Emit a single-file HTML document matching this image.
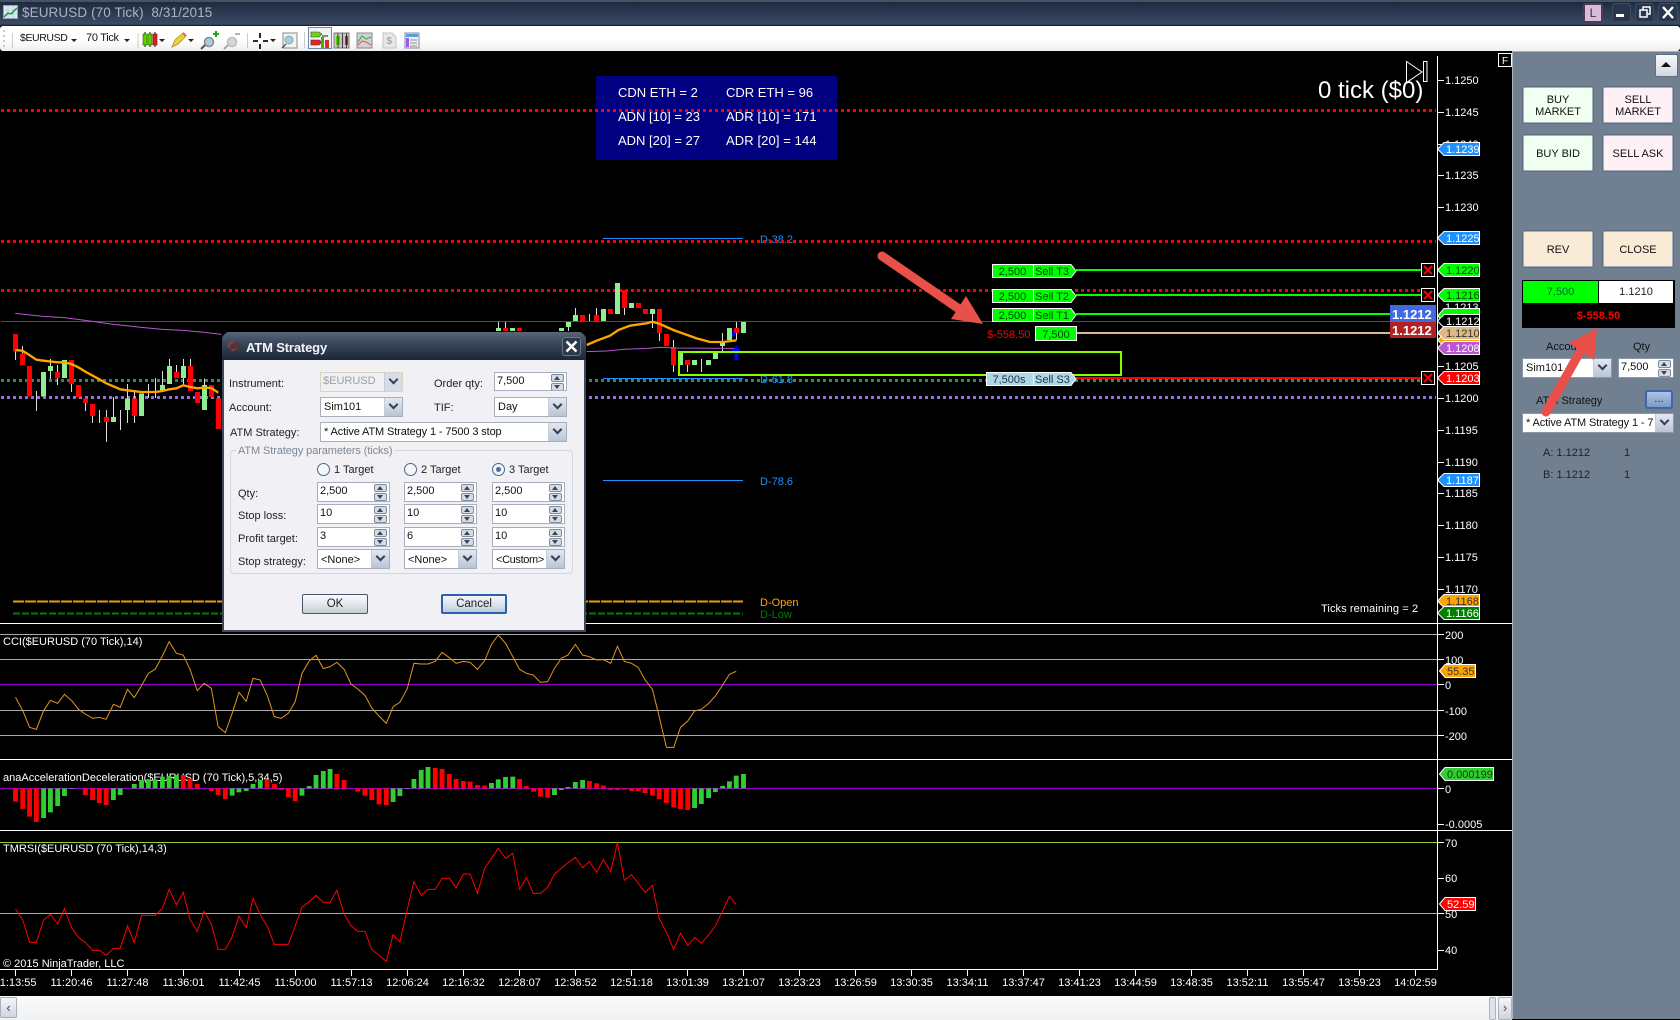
<!DOCTYPE html>
<html><head><meta charset="utf-8"><title>$EURUSD (70 Tick)</title>
<style>
html,body{margin:0;padding:0;background:#000;width:1680px;height:1020px;overflow:hidden}
body{position:relative;font-family:"Liberation Sans",sans-serif;font-size:11px;color:#111}
.a{position:absolute;box-sizing:border-box}
.t{position:absolute;white-space:nowrap;font-size:11px;line-height:14px}
svg{position:absolute;left:0;top:0}
svg text{font-family:"Liberation Sans",sans-serif;font-size:11px}
.inp{position:absolute;box-sizing:border-box;background:#fff;border:1px solid #a8afba;font-size:11px;line-height:15px;padding:0 0 0 2px;white-space:nowrap;overflow:hidden;color:#111}
.dd{position:absolute;top:0;right:0;bottom:0;width:17px;background:linear-gradient(#e2e8f1,#b9c5d6);border-left:1px solid #c4ccd8}
.dd::after{content:"";position:absolute;left:5px;top:3px;width:5px;height:5px;border-left:2px solid #333e50;border-bottom:2px solid #333e50;transform:rotate(-45deg)}
.sp{position:absolute;top:1px;right:2px;width:13px}
.sp i{display:block;height:8px;box-sizing:border-box;border:1px solid #7f8b9c;border-radius:2px;background:#d6dce5;position:relative;margin-bottom:1px}
.sp i::after{content:"";position:absolute;left:2px;top:1px;border-left:3px solid transparent;border-right:3px solid transparent}
.sp i.u::after{border-bottom:4px solid #3a4658}
.sp i.d::after{border-top:4px solid #3a4658}
.btn{position:absolute;box-sizing:border-box;border:2px solid #a6b0bc;border-radius:3px;display:flex;align-items:center;justify-content:center;text-align:center;font-size:11px;line-height:12.5px;color:#111;outline:1px solid #5f6e80;outline-offset:-1px;padding-top:2px}
.r{position:absolute;box-sizing:border-box;width:13px;height:13px;border-radius:50%;border:1px solid #47698c;background:#f4f6fa}
.dlg{color:#222}
</style></head><body>

<!-- title bar -->
<div class="a" style="left:0;top:0;width:1680px;height:27px;background:linear-gradient(#1f2a3c 0,#6a7a90 1px,#1e2a3c 2px,#26334a 8px,#3b4a64 24px,#0e141e 26px)"></div>
<div class="t" style="left:22px;top:5px;font-size:13.5px;line-height:16px;letter-spacing:.1px;color:#a9b3c2">$EURUSD (70 Tick)&nbsp; 8/31/2015</div>
<svg width="15" height="15" style="left:3px;top:5px" viewBox="0 0 15 15"><rect x=".5" y=".5" width="14" height="13" fill="#dfe8f2" stroke="#8fa5bf"/><path d="M2 5H14M2 9H14M5 1V13M10 1V13" stroke="#a9bdd3" stroke-width=".6"/><path d="M1 12L5 8L8 9L14 3" stroke="#19a63a" stroke-width="1.6" fill="none"/></svg>
<div class="a" style="left:1583px;top:3px;width:20px;height:20px;background:#d8bcd8;border:2px solid #4d3a55;border-radius:2px;color:#333;text-align:center;font-size:12px;line-height:16px">L</div>
<div class="a" style="left:1612px;top:3px;width:19px;height:19px;background:#27364c;border:1px solid #3d4c63;border-radius:3px"></div>
<div class="a" style="left:1635px;top:3px;width:19px;height:19px;background:#27364c;border:1px solid #3d4c63;border-radius:3px"></div>
<div class="a" style="left:1658px;top:3px;width:20px;height:19px;background:#27364c;border:1px solid #3d4c63;border-radius:3px"></div>
<svg width="1680" height="27"><path d="M1616 14H1624V17H1616Z" fill="#fff"/><path d="M1640 10h7v7h-7zM1643 10V7h7v7h-3" fill="none" stroke="#fff" stroke-width="1.5"/><path d="M1663 7L1673 18M1673 7L1663 18" stroke="#fff" stroke-width="2.4"/></svg>

<!-- toolbar -->
<div class="a" style="left:0;top:26px;width:1680px;height:25px;background:linear-gradient(#fff 0,#fff 55%,#efefef);border-radius:3px"></div>
<div class="t" style="left:20px;top:31px;font-size:10.5px;letter-spacing:-.4px;color:#111">$EURUSD</div>
<div class="t" style="left:86px;top:31px;font-size:11px;letter-spacing:-.3px;color:#111">70 Tick</div>
<div class="a" style="left:308px;top:27px;width:24px;height:22px;border:1px solid #6d8ba6;background:#eef3f8"></div>
<svg width="460" height="52" style="left:0;top:0">
<path d="M3 30h2v2H3zM3 35h2v2H3zM3 40h2v2H3zM3 45h2v2H3z" fill="#ccc"/>
<path d="M12.500 33V48M138 33V48M247.500 33V48M304.500 32V48" stroke="#ccc"/>
<g fill="#222"><path d="M71 39h6l-3 3zM124 39h6l-3 3zM159 39h6l-3 3zM188 39h6l-3 3zM270 39h6l-3 3z"/></g>
<g stroke="#111"><path d="M145 32V47M150 32V47M155 32V47"/></g>
<rect x="143" y="34" width="4" height="11" fill="#5fd000" stroke="#2a6000" stroke-width=".6"/><rect x="148" y="34" width="4" height="11" fill="#5fd000" stroke="#2a6000" stroke-width=".6"/><rect x="153" y="34" width="4" height="11" fill="#e02020" stroke="#701010" stroke-width=".6"/>
<path d="M172 47L175 40L183 33L186 36L178 44Z" fill="#f2d23c" stroke="#a88a18" stroke-width=".8"/><path d="M183 33L186 36" stroke="#e36a50" stroke-width="2"/>
<circle cx="209" cy="42" r="4.500" fill="#a9cbe8" stroke="#8a8a8a" stroke-width="1.500"/><path d="M205 45L201 49" stroke="#555" stroke-width="2"/><path d="M213 34H219M216 31V37" stroke="#1aaa1a" stroke-width="2"/>
<circle cx="232" cy="42" r="4.500" fill="#d6d6d6" stroke="#bcbcbc" stroke-width="1.500"/><path d="M228 45L224 49" stroke="#aaa" stroke-width="2"/><path d="M235 34H240" stroke="#b5b5b5" stroke-width="2"/>
<path d="M253 41H258M263 41H268M260 33V38M260 44V49" stroke="#111" stroke-width="1.800"/>
<rect x="283" y="33" width="14" height="15" fill="#f4f4f4" stroke="#888"/><circle cx="289" cy="40" r="4" fill="#a9cbe8" stroke="#8aa"/><path d="M286 44L282 48" stroke="#555" stroke-width="1.500"/>
<path d="M311 32H319L322 34L319 37H311Z" fill="#77cc22" stroke="#2a5a10" stroke-width=".6"/><path d="M311 40H319L322 42L319 45H311Z" fill="#e02a2a" stroke="#701010" stroke-width=".6"/><rect x="321" y="37" width="3" height="11" fill="#3cb400"/><rect x="325" y="40" width="4" height="8" fill="#e02a2a"/><path d="M322 36H328" stroke="#222"/>
<rect x="334" y="33" width="15" height="15" fill="#c8c8c8" stroke="#777"/><rect x="336" y="36" width="4" height="9" fill="#5fd000"/><rect x="341" y="37" width="3" height="7" fill="#bbb"/><rect x="345" y="36" width="3" height="9" fill="#e02020"/><path d="M338 33V48M342.500 33V48M346.500 33V48" stroke="#111" stroke-width=".7"/>
<rect x="357" y="33" width="15" height="15" fill="#d2d2d2" stroke="#888"/><path d="M358 42L362 36L366 39L371 37" fill="none" stroke="#2aa84a"/><path d="M358 45L362 41L366 42L371 45" fill="none" stroke="#e05050"/>
<path d="M383 33H392L396 37V48H383Z" fill="#e8e8e8" stroke="#c4c4c4"/><text x="386.500" y="44" style="font-size:10px;font-weight:bold" fill="#a8a8a8">$</text>
<rect x="405" y="33" width="14" height="15" fill="#eef0f4" stroke="#7a8ca8"/><rect x="406" y="34" width="12" height="3" fill="#5aa0dc"/><rect x="406" y="38" width="3" height="9" fill="#9c5ae0"/><path d="M410 40H417M410 43H417M410 46H417" stroke="#8a8a9a"/>
</svg>

<!-- main chart graphics -->
<svg width="1680" height="1020" style="top:0">
<rect x="596" y="76" width="241" height="84" fill="#000080"/>
<g fill="#fff" style="font-size:13px">
<text x="618" y="97" style="font-size:13px">CDN ETH = 2</text><text x="726" y="97" style="font-size:13px">CDR ETH = 96</text>
<text x="618" y="121" style="font-size:13px">ADN [10] = 23</text><text x="726" y="121" style="font-size:13px;letter-spacing:.1px">ADR [10] = 171</text>
<text x="618" y="145" style="font-size:13px">ADN [20] = 27</text><text x="726" y="145" style="font-size:13px;letter-spacing:.1px">ADR [20] = 144</text>
</g>

<!-- fib lines + labels -->
<path d="M603 238.500H743M603 378.500H743M603 480.500H743" stroke="#1e90ff" stroke-width="1"/>
<g fill="#1e90ff"><text x="760" y="243">D-38.2</text><text x="760" y="383">D-61.8</text><text x="760" y="485">D-78.6</text></g>
<text x="760" y="606" fill="#ffa500">D-Open</text><text x="760" y="618" fill="#008000">D-Low</text>

<!-- thin lines -->
<path d="M1 321.500H1436" stroke="#a52a2a"/>

<!-- dotted -->
<g fill="none" stroke-width="3" stroke-dasharray="3 3">
<path d="M1 110.500H1436M1 241.500H1436M1 290.500H1421" stroke="#f00"/>
<path d="M1 380.500H1421" stroke="#2e8b57"/>
<path d="M1 397.500H1436" stroke="#9370db"/>
</g>
<path d="M13 601.500H743" stroke="#ec9a0c" stroke-width="2" stroke-dasharray="11 1"/>
<path d="M13 613.500H743" stroke="#008000" stroke-width="2" stroke-dasharray="7 2"/>

<!-- candles left -->
<g transform="translate(0,310) scale(.33333)" fill="none" shape-rendering="crispEdges">
<path stroke="#ddd" stroke-width="3" d="M46 125V150M67 108V130M109 243V303M151 147V207M172 165V225M214 222V246M256 279V303M277 318V339M298 300V339M319 300V396M340 261V321M361 300V360M382 222V339M403 243V339M445 222V264M466 204V264M487 183V225M508 147V168M529 165V186M550 147V225M571 147V168M613 205V225"/>
<path stroke="#f00" stroke-width="15" d="M46 72V125M67 130V165M88 168V260M172 186V204M214 150V222M235 225V261M256 265V279M277 282V318M319 321V336M403 265V318M529 186V204M571 168V243M592 246V279M634 225V261M655 265V357"/>
<path stroke="#90ee90" stroke-width="15" d="M130 186V260M151 168V183M193 150V204M340 321V336M382 265V300M424 250V318M487 225V243M508 168V222M550 168V204M613 225V300"/>
<polyline stroke="#ba55d3" stroke-width="3" shape-rendering="auto" points="46,10 130,19 193,23 256,31 340,43 424,52 487,58 550,61 613,67 665,73"/>
<polyline stroke="#ffa500" stroke-width="7" shape-rendering="auto" points="46,120 67,122 88,135 109,149 130,152 172,157 193,157 214,162 235,172 256,185 298,208 319,220 361,238 382,241 424,246 466,246 487,243 508,238 529,235 550,226 571,231 592,235 613,233 634,234 655,248"/>
</g>
<!-- candles right -->
<g transform="translate(490,270) scale(.33333)" fill="none" shape-rendering="crispEdges">
<path stroke="#ddd" stroke-width="3" d="M25 156V174M46 156V174M235 171V183M256 114V135M298 132V153M319 114V135M403 114V135M487 132V174M508 189V213M550 210V231M550 285V306M592 285V306M634 267V306M697 189V243M739 156V210"/>
<path stroke="#f00" stroke-width="15" d="M46 174V183M88 174V183M277 135V153M319 135V153M361 117V132M403 60V114M445 99V114M466 117V132M508 117V189M529 192V228M550 231V285M592 270V285M739 174V189"/>
<path stroke="#90ee90" stroke-width="15" d="M25 174V183M67 174V183M214 174V183M235 156V171M256 135V153M340 117V153M382 39V132M424 99V114M487 117V132M571 249V285M613 270V285M655 270V285M676 249V267M697 213V228M718 174V210M760 156V189"/>
<polyline stroke="#ba55d3" stroke-width="3" shape-rendering="auto" points="290,245 350,243 400,238 470,235 510,232 560,234 739,235"/>
<polyline stroke="#ffa500" stroke-width="7" shape-rendering="auto" points="290,225 320,212 360,197 385,180 420,167 470,160 487,155 510,162 550,180 620,205 660,216 700,216 739,211"/>
<path d="M739 226L752 243H745V270H733V243H726Z" fill="#0000ff" shape-rendering="auto"/>
<path d="M727 178L738 191L727 204Z" fill="#0000ff" shape-rendering="auto"/>
</g>

<!-- box and position lines -->
<rect x="679" y="352" width="442" height="23" fill="none" stroke="#7fff00" stroke-width="2"/>
<path d="M1076 270H1421M1076 295H1421M1076 314H1391" stroke="#0f0" stroke-width="2"/>
<path d="M1076 333H1391" stroke="#deb887" stroke-width="2"/>
<path d="M1076 378H1421" stroke="#f00" stroke-width="2"/>

<!-- order labels -->
<g stroke="#fff" fill="#0f0">
<path d="M992.500 264.500H1071L1076 271L1071 277.500H992.500Z"/><path d="M1033.500 264V278"/>
<path d="M992.500 289.500H1071L1076 296L1071 302.500H992.500Z"/><path d="M1033.500 289V303"/>
<path d="M992.500 308.500H1071L1076 315L1071 321.500H992.500Z"/><path d="M1033.500 308V322"/>
<rect x="1035.500" y="326.500" width="41" height="14"/>
<path d="M986.500 372.500H1071L1076 379L1071 385.500H986.500Z" fill="#add8e6"/><path d="M1033.500 372V386" stroke="#eaf6fb"/>
</g>
<g fill="#040">
<text x="1012.500" y="275" text-anchor="middle">2,500</text><text x="1035" y="275">Sell T3</text>
<text x="1012.500" y="300" text-anchor="middle">2,500</text><text x="1035" y="300">Sell T2</text>
<text x="1012.500" y="319" text-anchor="middle">2,500</text><text x="1035" y="319">Sell T1</text>
<text x="1056" y="338" text-anchor="middle">7,500</text>
</g>
<g fill="#234"><text x="1009" y="383" text-anchor="middle">7,500s</text><text x="1035" y="383">Sell S3</text></g>
<text x="987" y="338" fill="#f00">$-558.50</text>

<!-- X boxes -->
<g fill="#000" stroke="#fff"><rect x="1421.500" y="263.500" width="13" height="13"/><rect x="1421.500" y="288.500" width="13" height="13"/><rect x="1421.500" y="371.500" width="13" height="13"/></g>
<path d="M1424 266L1432 274M1432 266L1424 274M1424 291L1432 299M1432 291L1424 299M1424 374L1432 382M1432 374L1424 382" stroke="#f00" stroke-width="2"/>

<!-- big price tags -->
<rect x="1390" y="305" width="46" height="17" fill="#4169e1"/><rect x="1390" y="322" width="46" height="16" fill="#b22222"/>
<g fill="#fff" style="font-weight:bold"><text x="1392" y="319" style="font-size:13px;font-weight:bold">1.1212</text><text x="1392" y="335" style="font-size:13px;font-weight:bold">1.1212</text></g>

<!-- separators, axis -->
<path d="M0 623.500H1512M0 759.500H1512M0 830.500H1512" stroke="#fff"/>
<path d="M0 969.500H1437M1437.500 56V970" stroke="#fff"/>
<g stroke="#fff"><path d="M1438 80.500h6M1438 112.500h6M1438 144.500h6M1438 175.500h6M1438 207.500h6M1438 366.500h6M1438 398.500h6M1438 430.500h6M1438 462.500h6M1438 493.500h6M1438 525.500h6M1438 557.500h6M1438 589.500h6M1438 634.500h6M1438 659.500h6M1438 684.500h6M1438 710.500h6M1438 735.500h6M1438 788.500h6M1438 824.500h6M1438 842.500h6M1438 878.500h6M1438 913.500h6M1438 950.500h6"/></g>
<g fill="#fff">
<text x="1445" y="84">1.1250</text><text x="1445" y="116">1.1245</text><text x="1445" y="148">1.1240</text><text x="1445" y="179">1.1235</text><text x="1445" y="211">1.1230</text><text x="1445" y="311">1.1213</text><text x="1445" y="370">1.1205</text><text x="1445" y="402">1.1200</text><text x="1445" y="434">1.1195</text><text x="1445" y="466">1.1190</text><text x="1445" y="497">1.1185</text><text x="1445" y="529">1.1180</text><text x="1445" y="561">1.1175</text><text x="1445" y="593">1.1170</text>
<text x="1445" y="639">200</text><text x="1445" y="664">100</text><text x="1445" y="689">0</text><text x="1445" y="715">-100</text><text x="1445" y="740">-200</text>
<text x="1445" y="793">0</text><text x="1445" y="828">-0.0005</text>
<text x="1445" y="847">70</text><text x="1445" y="882">60</text><text x="1445" y="918">50</text><text x="1445" y="954">40</text>
<text x="1321" y="612" style="letter-spacing:.1px">Ticks remaining = 2</text>
<text x="3" y="645">CCI($EURUSD (70 Tick),14)</text>
<text x="3" y="781">anaAccelerationDeceleration($EURUSD (70 Tick),5,34,5)</text>
<text x="3" y="852">TMRSI($EURUSD (70 Tick),14,3)</text>
<text x="3" y="967">© 2015 NinjaTrader, LLC</text>
</g>

<!-- axis price tags -->
<g stroke="#fff">
<path d="M1437.500 149L1444 142.500H1479.500V155.500H1444Z" fill="#1e90ff"/>
<path d="M1437.500 238L1444 231.500H1479.500V244.500H1444Z" fill="#1e90ff"/>
<path d="M1437.500 270L1444 263.500H1479.500V276.500H1444Z" fill="#0f0"/>
<path d="M1437.500 295L1444 288.500H1479.500V301.500H1444Z" fill="#0f0"/>
<path d="M1437.500 316L1444 308.500H1479.500V322H1444Z" fill="#0f0"/>
<path d="M1437.500 321L1444 314.500H1479.500V327.500H1444Z" fill="#000"/>
<path d="M1437.500 340L1444 333.500H1479.500V346.500H1444Z" fill="#ffa500"/>
<path d="M1437.500 333L1444 326.500H1479.500V339.500H1444Z" fill="#deb887"/>
<path d="M1437.500 348L1444 341.500H1479.500V354.500H1444Z" fill="#ba55d3"/>
<path d="M1437.500 378L1444 371.500H1479.500V384.500H1444Z" fill="#f00"/>
<path d="M1437.500 480L1444 473.500H1479.500V486.500H1444Z" fill="#1e90ff"/>
<path d="M1437.500 601L1444 594.500H1479.500V607.500H1444Z" fill="#ffa500"/>
<path d="M1437.500 613L1444 606.500H1479.500V619.500H1444Z" fill="#008000"/>
<path d="M1439.500 671L1445 664.500H1475.500V677.500H1445Z" fill="#ffa500"/>
<path d="M1439.500 774L1445 767.500H1493.500V780.500H1445Z" fill="#32cd32"/>
<path d="M1439.500 904L1445 897.500H1475.500V910.500H1445Z" fill="#f00"/>
</g>
<g fill="#fff">
<text x="1446" y="153">1.1239</text><text x="1446" y="242">1.1225</text><text x="1446" y="325">1.1212</text><text x="1446" y="352">1.1208</text><text x="1446" y="382">1.1203</text><text x="1446" y="484">1.1187</text><text x="1446" y="617">1.1166</text><text x="1447" y="908">52.59</text>
</g>
<g fill="#040"><text x="1446" y="274">1.1220</text><text x="1446" y="299">1.1216</text></g>
<g fill="#333"><text x="1446" y="337">1.1210</text><text x="1446" y="605">1.1168</text><text x="1447" y="675">55.35</text><text x="1447" y="778" fill="#040">0.000199</text></g>

<!-- 0 tick -->
<text x="1318" y="98" fill="#fff" style="font-size:24px">0 tick ($0)</text>
<path d="M1406.500 61.500L1422 72L1406.500 82.500Z" fill="none" stroke="#fff"/><rect x="1423.500" y="61.500" width="3.500" height="20" fill="none" stroke="#fff"/>
<rect x="1498.500" y="53.500" width="13" height="13" fill="#000" stroke="#fff"/><text x="1502" y="64" fill="#fff" style="font-size:10px">F</text>

<!-- CCI lines -->
<path d="M0 634.500H1437M0 659.500H1437M0 710.500H1437M0 735.500H1437M0 913.500H1437" stroke="#aaa"/>
<path d="M0 684.500H1437M0 788.500H1437" stroke="#9400d3"/>
<path d="M0 842.500H1437" stroke="#9acd32"/>

<g transform="translate(0,620) scale(.48469,.33333)" fill="none">
<path stroke="#f00" stroke-width="10" d="M32 505V545M47 505V567M61 505V590M75 505V606M176 505V525M191 505V540M205 505V549M219 505V555M378 505V465M392 505V475M407 505V492M436 505V513M450 505V525M465 505V537M551 505V478M566 505V492M580 505V510M595 505V531M609 505V543M695 505V462M710 505V480M738 505V515M753 505V527M767 505V540M782 505V553M797 505V555M898 505V444M912 505V447M927 505V462M941 505V477M956 505V483M970 505V485M985 505V495M1000 505V497M1072 505V477M1086 505V498M1101 505V515M1115 505V530M1130 505V533M1216 505V483M1231 505V490M1245 505V497M1260 505V510M1274 505V510M1288 505V509M1303 505V513M1317 505V513M1331 505V519M1346 505V527M1360 505V537M1375 505V549M1390 505V562M1404 505V567M1419 505V570"/>
<path stroke="#32cd32" stroke-width="10" d="M90 505V594M104 505V577M119 505V558M133 505V528M148 505V507M234 505V540M248 505V525M277 505V492M292 505V480M306 505V478M320 505V478M335 505V470M349 505V468M364 505V465M479 505V527M493 505V517M508 505V513M522 505V492M537 505V480M623 505V527M638 505V498M652 505V465M667 505V453M681 505V447M811 505V546M825 505V528M840 505V507M854 505V477M869 505V450M883 505V441M1014 505V489M1028 505V478M1043 505V471M1058 505V470M1144 505V525M1158 505V510M1172 505V501M1187 505V486M1202 505V480M1433 505V564M1447 505V552M1462 505V534M1476 505V516M1491 505V498M1505 505V484M1519 505V467M1534 505V462"/>
<polyline vector-effect="non-scaling-stroke" stroke="#e0961c" stroke-width="1" points="32,232 47,272 61,322 75,328 90,272 104,241 119,250 133,223 148,242 162,268 176,282 191,295 205,292 219,298 234,253 248,262 263,208 277,233 292,197 306,160 320,148 335,108 349,65 364,100 378,105 392,148 407,212 421,190 436,205 450,320 465,338 479,280 493,217 508,244 522,175 537,180 551,225 566,290 580,295 595,280 609,245 623,160 638,123 652,106 667,146 681,140 695,127 710,148 724,192 738,207 753,226 767,264 782,288 797,310 811,260 825,247 840,207 854,130 869,132 883,132 898,124 912,97 927,113 941,130 956,124 970,127 985,148 1000,122 1014,73 1028,45 1043,70 1058,110 1072,148 1086,160 1100,165 1115,187 1130,185 1144,145 1158,115 1172,105 1187,73 1202,105 1216,110 1231,120 1245,119 1260,130 1274,79 1288,124 1303,130 1317,143 1331,180 1346,208 1360,290 1375,382 1390,382 1404,322 1419,303 1433,273 1447,268 1462,250 1476,228 1491,195 1505,163 1519,154"/>
</g>
<g transform="translate(0,820) scale(.48469,.33333)" fill="none">
<polyline vector-effect="non-scaling-stroke" stroke="#f00" stroke-width="1" points="32,267 47,300 61,367 75,367 90,300 104,283 119,312 133,266 148,324 162,352 176,367 191,391 205,391 219,406 234,385 248,385 263,317 277,368 292,286 306,286 320,286 335,265 349,208 364,254 378,217 392,298 407,334 421,274 436,312 450,388 465,388 479,350 493,289 508,323 522,235 537,285 551,318 566,373 580,373 595,373 609,318 623,262 638,245 652,226 667,247 681,247 695,211 710,282 724,317 738,334 753,334 767,388 782,406 797,424 811,344 825,365 840,270 854,185 869,226 883,208 898,208 912,175 927,175 941,203 956,162 970,162 985,220 1000,145 1014,115 1028,85 1043,115 1058,100 1072,208 1086,172 1100,220 1115,220 1130,202 1144,162 1158,145 1172,128 1187,112 1202,143 1216,125 1231,157 1245,119 1260,155 1274,67 1288,181 1303,164 1317,190 1331,217 1346,196 1360,295 1375,337 1390,388 1404,340 1419,377 1433,352 1447,370 1462,345 1476,318 1491,272 1505,229 1519,254"/>
</g>

<!-- time axis -->
<path stroke="#fff" d="M15.500 970v6M71.500 970v6M127.500 970v6M183.500 970v6M239.500 970v6M295.500 970v6M351.500 970v6M407.500 970v6M463.500 970v6M519.500 970v6M575.500 970v6M631.500 970v6M687.500 970v6M743.500 970v6M799.500 970v6M855.500 970v6M911.500 970v6M967.500 970v6M1023.500 970v6M1079.500 970v6M1135.500 970v6M1191.500 970v6M1247.500 970v6M1303.500 970v6M1359.500 970v6M1415.500 970v6"/>
<g fill="#fff" text-anchor="middle" style="font-size:10.500px">
<text x="15.500" y="986">11:13:55</text><text x="71.500" y="986">11:20:46</text><text x="127.500" y="986">11:27:48</text><text x="183.500" y="986">11:36:01</text><text x="239.500" y="986">11:42:45</text><text x="295.500" y="986">11:50:00</text><text x="351.500" y="986">11:57:13</text><text x="407.500" y="986">12:06:24</text><text x="463.500" y="986">12:16:32</text><text x="519.500" y="986">12:28:07</text><text x="575.500" y="986">12:38:52</text><text x="631.500" y="986">12:51:18</text><text x="687.500" y="986">13:01:39</text><text x="743.500" y="986">13:21:07</text><text x="799.500" y="986">13:23:23</text><text x="855.500" y="986">13:26:59</text><text x="911.500" y="986">13:30:35</text><text x="967.500" y="986">13:34:11</text><text x="1023.500" y="986">13:37:47</text><text x="1079.500" y="986">13:41:23</text><text x="1135.500" y="986">13:44:59</text><text x="1191.500" y="986">13:48:35</text><text x="1247.500" y="986">13:52:11</text><text x="1303.500" y="986">13:55:47</text><text x="1359.500" y="986">13:59:23</text><text x="1415.500" y="986">14:02:59</text>
</g>
</svg>

<!-- scrollbar -->
<div class="a" style="left:0;top:996px;width:1512px;height:24px;background:linear-gradient(#fafafa,#f0f1f3)"></div>
<div class="a" style="left:0;top:997px;width:17px;height:21px;background:linear-gradient(#f4f6f9,#cfd5dd);border:1px solid #a8b0bc;border-radius:2px;color:#445;font-size:13px;line-height:19px;text-align:center">‹</div>
<div class="a" style="left:1489px;top:997px;width:7px;height:23px;background:#dfe3e8;border:1px solid #aab2be;border-radius:2px"></div>
<div class="a" style="left:1498px;top:997px;width:14px;height:23px;background:linear-gradient(#f4f6f9,#cfd5dd);border:1px solid #a8b0bc;border-radius:2px;color:#445;font-size:13px;line-height:20px;text-align:center">›</div>

<!-- right panel -->
<div class="a" style="left:1512px;top:51px;width:168px;height:968px;background:#708090;border-left:1px solid #aeb6c0;border-top:1px solid #a8b0ba"></div>
<div class="a" style="left:1655px;top:54px;width:23px;height:23px;background:linear-gradient(#f8f9fb,#d2d8e0);border:1px solid #5f6e80;border-radius:2px"></div>
<svg width="1680" height="100"><path d="M1666 62L1671 67H1661Z" fill="#111"/></svg>
<div class="btn" style="left:1522px;top:86px;width:72px;height:38px;background:#f0fff0">BUY<br>MARKET</div>
<div class="btn" style="left:1602px;top:86px;width:72px;height:38px;background:#fff0f5">SELL<br>MARKET</div>
<div class="btn" style="left:1522px;top:134px;width:72px;height:38px;background:#f0fff0">BUY BID</div>
<div class="btn" style="left:1602px;top:134px;width:72px;height:38px;background:#fff0f5">SELL ASK</div>
<div class="btn" style="left:1522px;top:230px;width:72px;height:38px;background:#faebd7">REV</div>
<div class="btn" style="left:1602px;top:230px;width:72px;height:38px;background:#faebd7">CLOSE</div>
<div class="a" style="left:1522px;top:280px;width:153px;height:48px;background:#000;border:1px solid #000"></div>
<div class="a" style="left:1523px;top:281px;width:75px;height:22px;background:#0f0;text-align:center;line-height:22px;color:#063">7,500</div>
<div class="a" style="left:1599px;top:281px;width:74px;height:22px;background:#fff;text-align:center;line-height:22px;color:#222">1.1210</div>
<div class="a" style="left:1523px;top:305px;width:151px;height:23px;text-align:center;line-height:23px;color:#f00;font-weight:bold">$-558.50</div>
<div class="t" style="left:1546px;top:340px">Account</div>
<div class="t" style="left:1633px;top:340px">Qty</div>
<div class="inp" style="left:1522px;top:358px;width:90px;height:20px;border-color:#8c98a6;line-height:19px;padding-left:3px">Sim101<div class="dd"></div></div>
<div class="inp" style="left:1618px;top:358px;width:56px;height:20px;border-color:#8c98a6;line-height:17px">7,500<div class="sp"><i class="u"></i><i class="d"></i></div></div>
<div class="t" style="left:1536px;top:394px">ATM Strategy</div>
<div class="a" style="left:1645px;top:390px;width:28px;height:19px;background:linear-gradient(#a9c4e4,#7c9bc4);border:2px solid #3e66a8;border-radius:3px;text-align:center;line-height:14px;color:#223">...</div>
<div class="inp" style="left:1522px;top:413px;width:152px;height:20px;border-color:#8c98a6;line-height:19px;padding-left:3px;letter-spacing:-.12px">* Active ATM Strategy 1 - 7<div class="dd"></div></div>
<div class="t" style="left:1543px;top:446px;color:#222">A: 1.1212</div><div class="t" style="left:1624px;top:446px;color:#222">1</div>
<div class="t" style="left:1543px;top:468px;color:#222">B: 1.1212</div><div class="t" style="left:1624px;top:468px;color:#222">1</div>

<!-- dialog -->
<div class="dlg">
<div class="a" style="left:222px;top:332px;width:364px;height:300px;background:#f0f0f5;border:2px solid #3e4a5c;border-top:0;border-radius:8px 8px 0 0"></div>
<div class="a" style="left:222px;top:332px;width:364px;height:28px;background:linear-gradient(#5a6678,#3c4a5e 35%,#1b2637);border-radius:8px 8px 0 0"></div>
<svg width="260" height="360"><circle cx="233" cy="346" r="4" fill="none" stroke="#a33" stroke-width="2" stroke-dasharray="8 3"/><circle cx="236" cy="346" r="3.500" fill="#5e2a2a" opacity=".7"/></svg>
<div class="t" style="left:246px;top:340px;font-size:13px;line-height:16px;color:#f2f4f8;font-weight:bold;letter-spacing:-.15px">ATM Strategy</div>
<div class="a" style="left:562px;top:337px;width:19px;height:19px;background:#2c384c;border:1px solid #6a7688;border-radius:3px"></div>
<svg width="590" height="360"><path d="M566.500 341.500L576.500 351.500M576.500 341.500L566.500 351.500" stroke="#fff" stroke-width="2.500"/></svg>

<div class="t" style="left:229px;top:377px">Instrument:</div>
<div class="inp" style="left:320px;top:372px;width:83px;height:20px;background:#eef0f2;border-color:#d8d4c0;color:#9aa0a8;line-height:17px">$EURUSD<div class="dd" style="background:#d6dde6"></div></div>
<div class="t" style="left:434px;top:377px">Order qty:</div>
<div class="inp" style="left:494px;top:372px;width:73px;height:19px;line-height:16px">7,500<div class="sp"><i class="u"></i><i class="d"></i></div></div>
<div class="t" style="left:229px;top:401px">Account:</div>
<div class="inp" style="left:320px;top:397px;width:83px;height:20px;line-height:19px;padding-left:3px">Sim101<div class="dd"></div></div>
<div class="t" style="left:434px;top:401px">TIF:</div>
<div class="inp" style="left:494px;top:397px;width:73px;height:20px;line-height:19px;padding-left:3px">Day<div class="dd"></div></div>
<div class="t" style="left:230px;top:426px">ATM Strategy:</div>
<div class="inp" style="left:320px;top:422px;width:247px;height:20px;line-height:18px;padding-left:3px;letter-spacing:-.12px">* Active ATM Strategy 1 - 7500 3 stop<div class="dd"></div></div>
<div class="a" style="left:230px;top:450px;width:343px;height:124px;border:1px solid #d4d8de;border-radius:4px"></div>
<div class="t" style="left:236px;top:444px;background:#f0f0f5;padding:0 2px;color:#7f8894;letter-spacing:-.1px">ATM Strategy parameters (ticks)</div>

<div class="r" style="left:317px;top:463px"></div><div class="t" style="left:334px;top:463px">1 Target</div>
<div class="r" style="left:404px;top:463px"></div><div class="t" style="left:421px;top:463px">2 Target</div>
<div class="r" style="left:492px;top:463px"></div><div class="a" style="left:496px;top:467px;width:5px;height:5px;border-radius:50%;background:#4a6f9a"></div><div class="t" style="left:509px;top:463px">3 Target</div>

<div class="t" style="left:238px;top:487px">Qty:</div>
<div class="t" style="left:238px;top:509px">Stop loss:</div>
<div class="t" style="left:238px;top:532px">Profit target:</div>
<div class="t" style="left:238px;top:555px">Stop strategy:</div>

<div class="inp" style="left:317px;top:482px;width:73px;height:20px;line-height:16px">2,500<div class="sp"><i class="u"></i><i class="d"></i></div></div>
<div class="inp" style="left:404px;top:482px;width:73px;height:20px;line-height:16px">2,500<div class="sp"><i class="u"></i><i class="d"></i></div></div>
<div class="inp" style="left:492px;top:482px;width:73px;height:20px;line-height:16px">2,500<div class="sp"><i class="u"></i><i class="d"></i></div></div>
<div class="inp" style="left:317px;top:504px;width:73px;height:20px;line-height:16px">10<div class="sp"><i class="u"></i><i class="d"></i></div></div>
<div class="inp" style="left:404px;top:504px;width:73px;height:20px;line-height:16px">10<div class="sp"><i class="u"></i><i class="d"></i></div></div>
<div class="inp" style="left:492px;top:504px;width:73px;height:20px;line-height:16px">10<div class="sp"><i class="u"></i><i class="d"></i></div></div>
<div class="inp" style="left:317px;top:527px;width:73px;height:20px;line-height:16px">3<div class="sp"><i class="u"></i><i class="d"></i></div></div>
<div class="inp" style="left:404px;top:527px;width:73px;height:20px;line-height:16px">6<div class="sp"><i class="u"></i><i class="d"></i></div></div>
<div class="inp" style="left:492px;top:527px;width:73px;height:20px;line-height:16px">10<div class="sp"><i class="u"></i><i class="d"></i></div></div>
<div class="inp" style="left:317px;top:549px;width:73px;height:20px;line-height:20px;padding-left:3px">&lt;None&gt;<div class="dd"></div></div>
<div class="inp" style="left:404px;top:549px;width:73px;height:20px;line-height:20px;padding-left:3px">&lt;None&gt;<div class="dd"></div></div>
<div class="inp" style="left:492px;top:549px;width:73px;height:20px;line-height:20px;padding-left:3px;letter-spacing:-.35px">&lt;Custom&gt;<div class="dd"></div></div>

<div class="a" style="left:302px;top:594px;width:66px;height:20px;background:linear-gradient(#fafbfc,#dfe3e8 60%,#c6ccd4);border:1px solid #48566a;border-radius:2px;text-align:center;line-height:18px;font-size:11.5px">OK</div>
<div class="a" style="left:441px;top:594px;width:66px;height:20px;background:linear-gradient(#f4f7fb,#d8e0ea 60%,#bcc9da);border:2px solid #2e60b0;border-radius:2px;text-align:center;line-height:16px;font-size:11.5px">Cancel</div>
</div>

<!-- red annotation arrows -->
<svg width="1680" height="1020" style="z-index:5">
<path d="M882 256L965 313" stroke="#e9504a" stroke-width="9" stroke-linecap="round"/>
<path d="M966 296L983 324L951 319Z" fill="#e9504a"/>
<path d="M1546 412L1581 350" stroke="#e9504a" stroke-width="9" stroke-linecap="round"/>
<path d="M1569 343L1597 328L1594 360Z" fill="#e9504a"/>
</svg>
</body></html>
